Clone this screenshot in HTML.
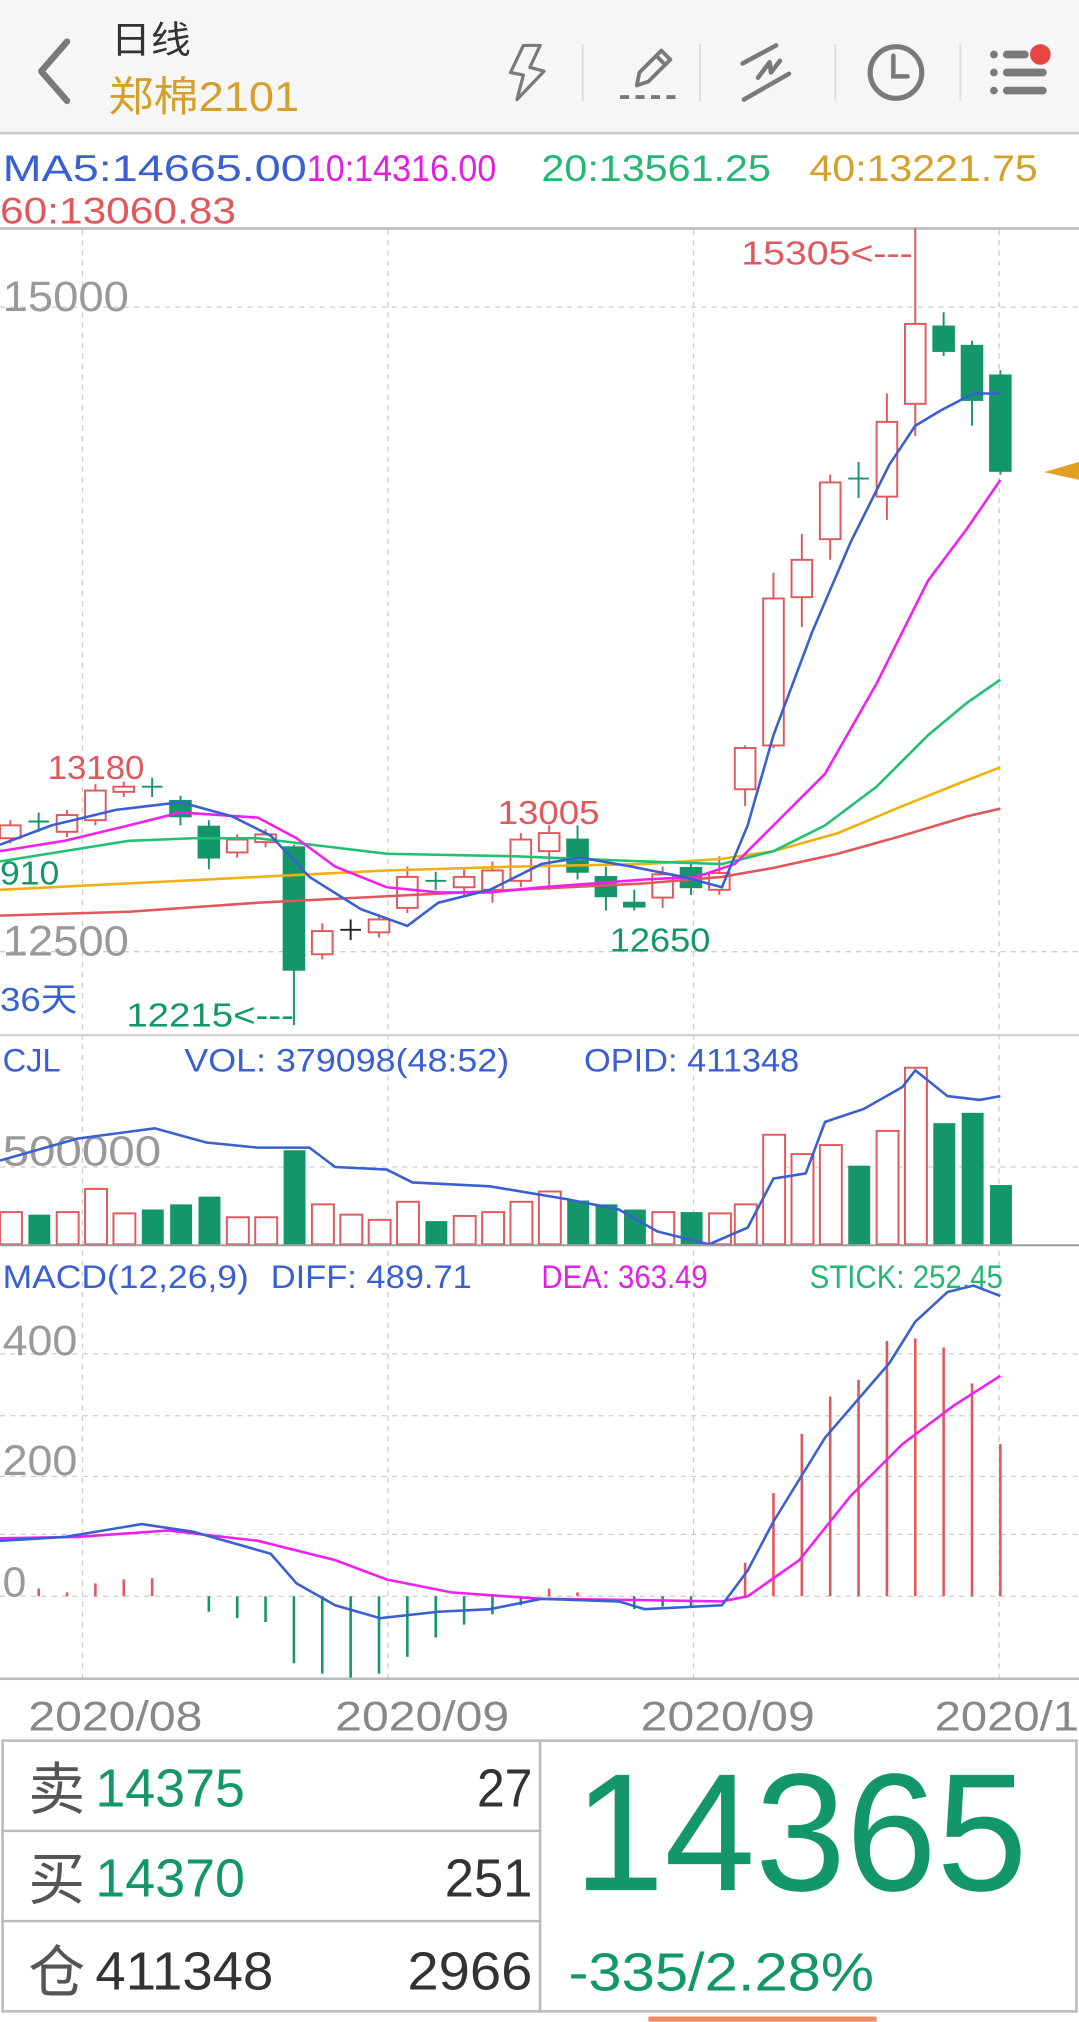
<!DOCTYPE html>
<html><head><meta charset="utf-8"><style>
html,body{margin:0;padding:0;background:#fff}
svg{display:block}
text{font-family:"Liberation Sans","Noto Sans CJK SC",sans-serif}
</style></head><body>
<svg width="1079" height="2022" viewBox="0 0 837 1568" xmlns="http://www.w3.org/2000/svg">
<rect x="0" y="0" width="837" height="103" fill="#f6f6f6"/>
<rect x="0" y="102" width="837" height="2" fill="#c8c8c8"/>
<path d="M52 32 L32 55 L52 78" fill="none" stroke="#7a7a7a" stroke-width="5" stroke-linecap="round" stroke-linejoin="round"/>
<text x="86" y="41" font-size="29" fill="#333" textLength="62" lengthAdjust="spacingAndGlyphs">日线</text>
<text x="84" y="86" font-size="32" fill="#d4a02a" textLength="148" lengthAdjust="spacingAndGlyphs">郑棉2101</text>
<path d="M406 35 L419 35 L411 52 L422 55 L401 77 L406 58 L396 56 Z" fill="none" stroke="#7a7a7a" stroke-width="2.5" stroke-linejoin="round"/>
<line x1="452" y1="34" x2="452" y2="78" stroke="#ddd" stroke-width="1.5"/>
<path d="M496 56 L513 39 L520 46 L503 63 L494 66 Z M509 43 L516 50" fill="none" stroke="#7a7a7a" stroke-width="3" stroke-linejoin="round"/>
<path d="M481 75 H488 M493 75 H500 M505 75 H512 M517 75 H524" stroke="#7a7a7a" stroke-width="3"/>
<line x1="543" y1="34" x2="543" y2="78" stroke="#ddd" stroke-width="1.5"/>
<path d="M576 49 L602 35 M588 60 L597 48 L598 56 L605 47 M577 77 L612 57" fill="none" stroke="#7a7a7a" stroke-width="3.5" stroke-linecap="round" stroke-linejoin="round"/>
<line x1="648" y1="34" x2="648" y2="78" stroke="#ddd" stroke-width="1.5"/>
<circle cx="695" cy="56" r="20" fill="none" stroke="#7a7a7a" stroke-width="4"/>
<path d="M693 43 V59 H704" fill="none" stroke="#7a7a7a" stroke-width="3.5" stroke-linecap="round"/>
<line x1="745" y1="34" x2="745" y2="78" stroke="#ddd" stroke-width="1.5"/>
<g fill="#7a7a7a"><circle cx="771" cy="42" r="3"/><circle cx="771" cy="56" r="3"/><circle cx="771" cy="70" r="3"/>
<rect x="778" y="39" width="20" height="6" rx="3"/><rect x="778" y="53" width="34" height="6" rx="3"/><rect x="778" y="67" width="34" height="6" rx="3"/></g>
<circle cx="807" cy="42" r="8" fill="#e84545"/>
<g font-size="29" lengthAdjust="spacingAndGlyphs">
<text x="2" y="140" fill="#3a5fd0" textLength="236" lengthAdjust="spacingAndGlyphs">MA5:14665.00</text>
<text x="238" y="140" fill="#e020e0" textLength="147" lengthAdjust="spacingAndGlyphs">10:14316.00</text>
<text x="420" y="140" fill="#22b874" textLength="178" lengthAdjust="spacingAndGlyphs">20:13561.25</text>
<text x="628" y="140" fill="#d4a02a" textLength="177" lengthAdjust="spacingAndGlyphs">40:13221.75</text>
<text x="0" y="173" fill="#e0575c" textLength="183" lengthAdjust="spacingAndGlyphs">60:13060.83</text>
</g>
<rect x="0" y="176" width="837" height="2" fill="#bbb"/>
<g stroke="#ccc" stroke-width="1" stroke-dasharray="4,4">
<line x1="64" y1="178" x2="64" y2="1302"/><line x1="301" y1="178" x2="301" y2="1302"/><line x1="538" y1="178" x2="538" y2="1302"/><line x1="775" y1="178" x2="775" y2="1302"/>
<line x1="0" y1="238" x2="837" y2="238"/><line x1="0" y1="738" x2="837" y2="738"/>
<line x1="0" y1="905" x2="837" y2="905"/>
<line x1="0" y1="1050" x2="837" y2="1050"/><line x1="0" y1="1098" x2="837" y2="1098"/><line x1="0" y1="1145" x2="837" y2="1145"/><line x1="0" y1="1190" x2="837" y2="1190"/><line x1="0" y1="1238" x2="837" y2="1238"/>
</g>
<g font-size="33" fill="#999">
<text x="2" y="241" textLength="98" lengthAdjust="spacingAndGlyphs">15000</text><text x="2" y="741" textLength="98" lengthAdjust="spacingAndGlyphs">12500</text>
</g>
<g stroke="#e0575c" stroke-width="1.5" fill="#fff">
<line x1="8" y1="636" x2="8" y2="654"/><rect x="0" y="640" width="16" height="10"/>
<line x1="52" y1="628" x2="52" y2="649"/><rect x="44" y="632" width="16" height="13"/>
<line x1="74" y1="608" x2="74" y2="640"/><rect x="66" y="613" width="16" height="23"/>
<line x1="96" y1="606" x2="96" y2="618"/><rect x="88" y="610" width="16" height="4"/>
<line x1="184" y1="647" x2="184" y2="665"/><rect x="176" y="651" width="16" height="10"/>
<line x1="206" y1="643" x2="206" y2="657"/><rect x="198" y="647" width="16" height="6"/>
<line x1="250" y1="716" x2="250" y2="744"/><rect x="242" y="722" width="16" height="18"/>
<line x1="294" y1="709" x2="294" y2="727"/><rect x="286" y="713" width="16" height="10"/>
<line x1="316" y1="672" x2="316" y2="708"/><rect x="308" y="680" width="16" height="24"/>
<line x1="360" y1="674" x2="360" y2="694"/><rect x="352" y="680" width="16" height="8"/>
<line x1="382" y1="668" x2="382" y2="700"/><rect x="374" y="675" width="16" height="15"/>
<line x1="404" y1="646" x2="404" y2="688"/><rect x="396" y="651" width="16" height="32"/>
<line x1="426" y1="640" x2="426" y2="690"/><rect x="418" y="646" width="16" height="14"/>
<line x1="514" y1="672" x2="514" y2="704"/><rect x="506" y="678" width="16" height="18"/>
<line x1="558" y1="664" x2="558" y2="694"/><rect x="550" y="677" width="16" height="13"/>
<line x1="578" y1="578" x2="578" y2="625"/><rect x="570" y="580" width="16" height="32"/>
<line x1="600" y1="444" x2="600" y2="580"/><rect x="592" y="464" width="16" height="114"/>
<line x1="622" y1="414" x2="622" y2="486"/><rect x="614" y="434" width="16" height="29"/>
<line x1="644" y1="368" x2="644" y2="434"/><rect x="636" y="374" width="16" height="44"/>
<line x1="688" y1="305" x2="688" y2="403"/><rect x="680" y="327" width="16" height="58"/>
<line x1="710" y1="177" x2="710" y2="338"/><rect x="702" y="251" width="16" height="62"/>
<line x1="272" y1="713" x2="272" y2="729" stroke="#222"/><line x1="264" y1="721" x2="280" y2="721" stroke="#222"/>
</g>
<g stroke="#12966a" stroke-width="1.5" fill="#12966a">
<line x1="30" y1="630" x2="30" y2="645"/><line x1="22" y1="637" x2="38" y2="637"/>
<line x1="118" y1="603" x2="118" y2="618"/><line x1="110" y1="610" x2="126" y2="610"/>
<line x1="140" y1="617" x2="140" y2="640"/><rect x="132" y="621" width="16" height="12"/>
<line x1="162" y1="636" x2="162" y2="674"/><rect x="154" y="641" width="16" height="24"/>
<line x1="228" y1="655" x2="228" y2="795"/><rect x="220" y="657" width="16" height="95"/>
<line x1="338" y1="676" x2="338" y2="690"/><line x1="330" y1="683" x2="346" y2="683"/>
<line x1="448" y1="640" x2="448" y2="682"/><rect x="440" y="651" width="16" height="25"/>
<line x1="470" y1="672" x2="470" y2="706"/><rect x="462" y="680" width="16" height="15"/>
<line x1="492" y1="690" x2="492" y2="706"/><rect x="484" y="700" width="16" height="3"/>
<line x1="536" y1="668" x2="536" y2="694"/><rect x="528" y="673" width="16" height="15"/>
<line x1="666" y1="358" x2="666" y2="386"/><line x1="658" y1="371" x2="674" y2="371"/>
<line x1="732" y1="242" x2="732" y2="276"/><rect x="724" y="253" width="16" height="19"/>
<line x1="754" y1="264" x2="754" y2="330"/><rect x="746" y="268" width="16" height="42"/>
<line x1="776" y1="287" x2="776" y2="368"/><rect x="768" y="291" width="16" height="74"/>
</g>
<g fill="none" stroke-width="2">
<polyline stroke="#e0575c" points="0,710 100,707 200,700 300,695 400,690 500,685 560,680 600,673 650,662 700,648 750,633 776,627"/>
<polyline stroke="#f0b010" points="0,690 100,685 200,680 300,675 400,672 500,670 560,666 600,660 650,646 700,625 750,605 776,595"/>
<polyline stroke="#22c070" points="0,668 50,660 100,652 150,650 200,650 250,656 300,662 400,664 500,668 560,670 600,660 640,640 680,610 720,570 750,545 776,527"/>
<polyline stroke="#f020f0" points="0,660 50,652 100,640 140,630 200,634 230,650 260,672 300,688 340,692 380,692 420,688 460,685 500,682 540,680 570,670 600,640 640,600 680,530 720,450 750,410 776,372"/>
<polyline stroke="#3a5fd0" points="0,655 40,640 90,628 140,622 180,633 210,648 240,680 280,705 316,718 340,700 380,690 420,670 450,665 490,672 530,680 560,688 580,640 600,570 630,490 660,420 690,360 710,330 730,318 755,305 776,305"/>
</g>
<path d="M810 366 L837 358 L837 372 Z" fill="#e0a020"/>
<g font-size="26">
<text x="575" y="205" fill="#e0575c" textLength="133" lengthAdjust="spacingAndGlyphs">15305&lt;---</text>
<text x="37" y="604" fill="#e0575c" textLength="75" lengthAdjust="spacingAndGlyphs">13180</text>
<text x="386" y="639" fill="#e0575c" textLength="79" lengthAdjust="spacingAndGlyphs">13005</text>
<text x="473" y="738" fill="#12966a" textLength="78" lengthAdjust="spacingAndGlyphs">12650</text>
<text x="98" y="796" fill="#12966a" textLength="130" lengthAdjust="spacingAndGlyphs">12215&lt;---</text>
<text x="0" y="686" fill="#12966a" textLength="46" lengthAdjust="spacingAndGlyphs">910</text>
<text x="0" y="784" fill="#3a5fd0" textLength="60" lengthAdjust="spacingAndGlyphs">36天</text>
</g>
<rect x="0" y="802" width="837" height="1.5" fill="#ccc"/>
<g font-size="25" fill="#3a5fd0">
<text x="2" y="831" textLength="45" lengthAdjust="spacingAndGlyphs">CJL</text><text x="143" y="831" textLength="252" lengthAdjust="spacingAndGlyphs">VOL: 379098(48:52)</text><text x="453" y="831" textLength="167" lengthAdjust="spacingAndGlyphs">OPID: 411348</text>
</g>
<text x="2" y="904" font-size="33" fill="#999" textLength="123" lengthAdjust="spacingAndGlyphs">500000</text>
<g stroke="#e0575c" stroke-width="1.5" fill="#fff">
<rect x="0" y="940" width="17" height="25"/><rect x="44" y="940" width="17" height="25"/><rect x="66" y="922" width="17" height="43"/><rect x="88" y="941" width="17" height="24"/>
<rect x="176" y="944" width="17" height="21"/><rect x="198" y="944" width="17" height="21"/><rect x="242" y="934" width="17" height="31"/><rect x="264" y="942" width="17" height="23"/><rect x="286" y="946" width="17" height="19"/><rect x="308" y="932" width="17" height="33"/>
<rect x="352" y="943" width="17" height="22"/><rect x="374" y="940" width="17" height="25"/><rect x="396" y="932" width="17" height="33"/><rect x="418" y="924" width="17" height="41"/>
<rect x="506" y="940" width="17" height="25"/><rect x="550" y="941" width="17" height="24"/><rect x="570" y="934" width="17" height="31"/><rect x="592" y="880" width="17" height="85"/><rect x="614" y="895" width="17" height="70"/><rect x="636" y="888" width="17" height="77"/><rect x="680" y="877" width="17" height="88"/><rect x="702" y="828" width="17" height="137"/>
</g>
<g fill="#12966a">
<rect x="22" y="942" width="17" height="23"/><rect x="110" y="938" width="17" height="27"/><rect x="132" y="934" width="17" height="31"/><rect x="154" y="928" width="17" height="37"/><rect x="220" y="892" width="17" height="73"/><rect x="330" y="947" width="17" height="18"/>
<rect x="440" y="931" width="17" height="34"/><rect x="462" y="934" width="17" height="31"/><rect x="484" y="938" width="17" height="27"/><rect x="528" y="940" width="17" height="25"/><rect x="658" y="904" width="17" height="61"/><rect x="724" y="871" width="17" height="94"/><rect x="746" y="863" width="17" height="102"/><rect x="768" y="919" width="17" height="46"/>
</g>
<polyline fill="none" stroke="#3a5fd0" stroke-width="2" points="0,900 60,883 120,875 160,886 200,890 240,890 260,905 300,907 320,917 380,920 440,930 480,938 510,955 550,965 580,952 600,914 625,910 640,870 670,860 700,843 710,830 735,850 760,853 776,850"/>
<rect x="0" y="965" width="837" height="1.5" fill="#999"/>
<g font-size="25">
<text x="2" y="999" fill="#3a5fd0" textLength="191" lengthAdjust="spacingAndGlyphs">MACD(12,26,9)</text><text x="210" y="999" fill="#3a5fd0" textLength="156" lengthAdjust="spacingAndGlyphs">DIFF: 489.71</text><text x="420" y="999" fill="#e020e0" textLength="129" lengthAdjust="spacingAndGlyphs">DEA: 363.49</text><text x="628" y="999" fill="#22b874" textLength="150" lengthAdjust="spacingAndGlyphs">STICK: 252.45</text>
</g>
<g font-size="33" fill="#999"><text x="2" y="1051" textLength="58" lengthAdjust="spacingAndGlyphs">400</text><text x="2" y="1144" textLength="58" lengthAdjust="spacingAndGlyphs">200</text><text x="2" y="1238">0</text></g>
<g stroke="#12966a" stroke-width="2">
<line x1="162" y1="1238" x2="162" y2="1250"/><line x1="184" y1="1238" x2="184" y2="1255"/><line x1="206" y1="1238" x2="206" y2="1258"/><line x1="228" y1="1238" x2="228" y2="1290"/><line x1="250" y1="1238" x2="250" y2="1298"/><line x1="272" y1="1238" x2="272" y2="1302"/><line x1="294" y1="1238" x2="294" y2="1298"/><line x1="316" y1="1238" x2="316" y2="1285"/><line x1="338" y1="1238" x2="338" y2="1270"/><line x1="360" y1="1238" x2="360" y2="1260"/><line x1="382" y1="1238" x2="382" y2="1252"/><line x1="404" y1="1238" x2="404" y2="1245"/><line x1="492" y1="1238" x2="492" y2="1248"/><line x1="514" y1="1238" x2="514" y2="1246"/><line x1="536" y1="1238" x2="536" y2="1246"/>
</g>
<g stroke="#e0575c" stroke-width="2">
<line x1="30" y1="1238" x2="30" y2="1232"/><line x1="52" y1="1238" x2="52" y2="1235"/><line x1="74" y1="1238" x2="74" y2="1228"/><line x1="96" y1="1238" x2="96" y2="1225"/><line x1="118" y1="1238" x2="118" y2="1224"/><line x1="426" y1="1238" x2="426" y2="1232"/><line x1="448" y1="1238" x2="448" y2="1235"/>
<line x1="578" y1="1238" x2="578" y2="1212"/><line x1="600" y1="1238" x2="600" y2="1158"/><line x1="622" y1="1238" x2="622" y2="1112"/><line x1="644" y1="1238" x2="644" y2="1083"/><line x1="666" y1="1238" x2="666" y2="1070"/><line x1="688" y1="1238" x2="688" y2="1040"/><line x1="710" y1="1238" x2="710" y2="1038"/><line x1="732" y1="1238" x2="732" y2="1045"/><line x1="754" y1="1238" x2="754" y2="1073"/><line x1="776" y1="1238" x2="776" y2="1120"/>
</g>
<g fill="none" stroke-width="2">
<polyline stroke="#f020f0" points="0,1193 60,1192 130,1187 200,1195 260,1210 300,1225 350,1235 420,1240 500,1241 560,1242 580,1238 620,1210 660,1160 700,1120 740,1090 776,1067"/>
<polyline stroke="#3a5fd0" points="0,1195 50,1192 110,1182 150,1188 210,1205 230,1228 260,1245 295,1255 340,1250 380,1248 420,1240 480,1242 500,1248 560,1245 580,1218 600,1180 640,1115 690,1057 710,1025 735,1002 755,997 776,1005"/>
</g>
<rect x="0" y="1301" width="837" height="2" fill="#bbb"/>
<g font-size="32" fill="#888">
<text x="22" y="1342" textLength="135" lengthAdjust="spacingAndGlyphs">2020/08</text><text x="260" y="1342" textLength="135" lengthAdjust="spacingAndGlyphs">2020/09</text><text x="497" y="1342" textLength="135" lengthAdjust="spacingAndGlyphs">2020/09</text><text x="725" y="1342" textLength="112" lengthAdjust="spacingAndGlyphs">2020/1</text>
</g>
<g fill="none" stroke="#bbb" stroke-width="2">
<rect x="2" y="1350" width="833" height="210"/>
<line x1="2" y1="1420" x2="419" y2="1420"/><line x1="2" y1="1490" x2="419" y2="1490"/><line x1="419" y1="1350" x2="419" y2="1560"/>
</g>
<g font-size="44" fill="#555"><text x="22" y="1403">卖</text><text x="22" y="1473">买</text><text x="22" y="1545">仓</text></g>
<g font-size="42">
<text x="74" y="1401" fill="#12966a" textLength="116" lengthAdjust="spacingAndGlyphs">14375</text><text x="74" y="1471" fill="#12966a" textLength="116" lengthAdjust="spacingAndGlyphs">14370</text><text x="74" y="1543" fill="#333" textLength="138" lengthAdjust="spacingAndGlyphs">411348</text>
<text x="370" y="1401" fill="#333" textLength="43" lengthAdjust="spacingAndGlyphs">27</text><text x="345" y="1471" fill="#333" textLength="68" lengthAdjust="spacingAndGlyphs">251</text><text x="316" y="1543" fill="#333" textLength="97" lengthAdjust="spacingAndGlyphs">2966</text>
</g>
<text x="445" y="1466" font-size="130" fill="#12966a" textLength="352" lengthAdjust="spacingAndGlyphs">14365</text>
<text x="441" y="1544" font-size="42" fill="#12966a" textLength="237" lengthAdjust="spacingAndGlyphs">-335/2.28%</text>
<rect x="503" y="1564" width="177" height="4" fill="#f08a60"/>
</svg>
</body></html>
